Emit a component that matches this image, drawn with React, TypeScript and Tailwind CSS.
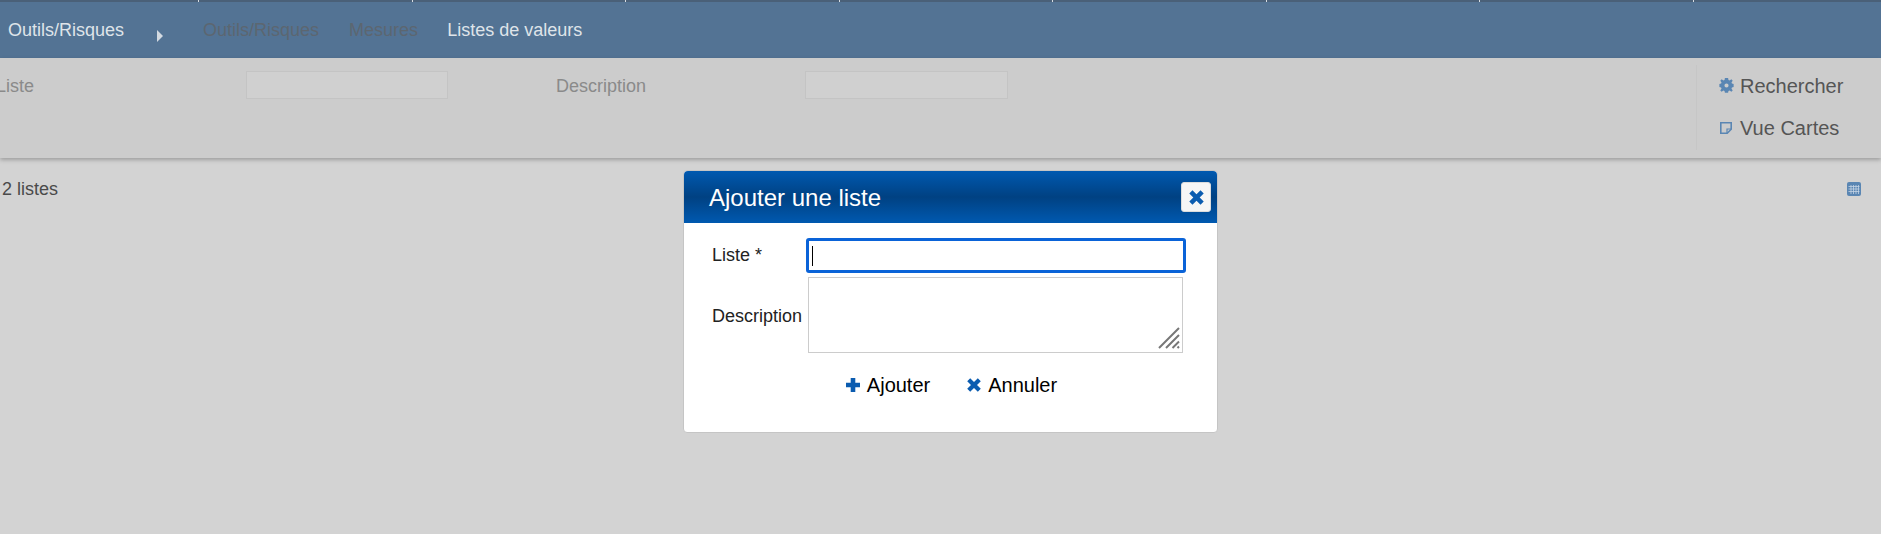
const TAB_COUNT = 8;

function CrossIcon({ className }: { className: string }) {
  return (
    <svg viewBox="0 0 16 16" className={className} fill="currentColor">
      <path d="M1.200 4.200 4.200 1.200 8 5l3.800-3.800 3 3L11 8l3.800 3.800-3 3L8 11l-3.800 3.800-3-3L5 8z" />
    </svg>
  );
}

function PlusIcon({ className }: { className: string }) {
  return (
    <svg viewBox="0 0 16 16" className={className} fill="currentColor">
      <path d="M5.700 1h4.600v4.700H15v4.600h-4.700V15H5.700v-4.700H1V5.700h4.700z" />
    </svg>
  );
}

function GearIcon({ className }: { className: string }) {
  return (
    <svg viewBox="0 0 16 16" className={className} fill="currentColor">
      <path
        fillRule="evenodd"
        d="M6.300 0h3.400l.4 2.200 1.200.5L13.200 1.400l1.400 1.400-1.300 1.900.5 1.200 1.800.4v3.400l-1.800.4-.5 1.200 1.300 1.900-1.400 1.400-1.900-1.300-1.200.5-.4 1.800H6.300l-.4-1.800-1.200-.5-1.900 1.300-1.400-1.400 1.300-1.900-.5-1.200L.4 9.700V6.300l1.800-.4.500-1.200L1.400 2.800l1.400-1.400 1.900 1.300 1.200-.5zM8 5.800a2.200 2.200 0 1 0 0 4.400 2.200 2.200 0 0 0 0-4.400z"
      />
    </svg>
  );
}

function NoteIcon({ className }: { className: string }) {
  return (
    <svg viewBox="0 0 12 12" className={className} fill="none" stroke="currentColor" strokeWidth="1.600">
      <path d="M.8.800h10.400v6.400L7.200 11.200H.8z" />
      <path d="M7 11V7h4" strokeWidth="1.200" />
    </svg>
  );
}

function GridIcon({ className }: { className: string }) {
  return (
    <svg viewBox="0 0 14 14" className={className}>
      <rect width="14" height="14" rx="2" fill="currentColor" />
      <path d="M1.500 4.500h11M1.500 7h11M1.500 9.500h11M4 3v9M6.500 3v9M9 3v9M11.500 3v9" stroke="#c4d3e3" strokeWidth="0.800" />
    </svg>
  );
}

function ResizeGrip() {
  return (
    <svg viewBox="0 0 22 22" className="absolute right-[2px] bottom-[3px] h-[22px] w-[22px]" stroke="#777777" strokeWidth="2">
      <path d="M1 21 21 1M8 21 21 8M14.500 21l6.500-6.500M19.500 21l1.500-1.500" />
    </svg>
  );
}

export default function App() {
  return (
    <div className="relative h-screen overflow-hidden bg-[#d3d3d3] font-['Liberation_Sans',Arial,sans-serif]">
      {/* Top nav */}
      <div className="h-[58px] bg-[#537394]">
        <div className="flex h-[2px] bg-[#4a6078]">
          {Array.from({ length: TAB_COUNT }).map((_, i) => (
            <div key={i} className={`h-full border-r border-[#d8dde2] ${i === 0 ? 'w-[199px]' : 'w-[213.500px]'}`} />
          ))}
        </div>
        <div className="flex h-[56px] items-center pt-[1px] text-[18px] text-[#dfe4e9]">
          <span className="ml-[8px]">Outils/Risques</span>
          <span className="ml-[33px] mt-[10px] h-0 w-0 border-y-[6px] border-l-[6px] border-y-transparent border-l-[#d3dae1]" />
          <span className="ml-[40px] text-[#5c6670]">Outils/Risques</span>
          <span className="ml-[30px] text-[#5c6670]">Mesures</span>
          <span className="ml-[29px]">Listes de valeurs</span>
        </div>
      </div>

      {/* Filter bar */}
      <div className="flex h-[100px] bg-[#cccccc] shadow-[0_2px_4px_rgba(0,0,0,0.25)]">
        <div className="flex flex-1 items-start pt-[13px] text-[18px] text-[#8a8a8a]">
          <span className="ml-[-4px] w-[250px] pt-[1px] leading-[28px]">Liste</span>
          <div className="h-[28px] w-[202px] border border-[#c4c4c4] bg-[#d0d0d0]" />
          <span className="ml-[108px] w-[249px] pt-[1px] leading-[28px]">Description</span>
          <div className="h-[28px] w-[203px] border border-[#c4c4c4] bg-[#d0d0d0]" />
        </div>
        <div className="mt-[7px] mb-[8px] w-[185px] border-l border-[#c6c6c6] pl-[22px] text-[20px] text-[#555555]">
          <div className="flex h-[41px] items-center gap-[6px]">
            <GearIcon className="h-[15px] w-[15px] text-[#5a86b3]" />
            <span>Rechercher</span>
          </div>
          <div className="flex h-[43px] items-center gap-[7px]">
            <NoteIcon className="ml-[1px] h-[12px] w-[12px] text-[#5a86b3]" />
            <span className="ml-[1px]">Vue Cartes</span>
          </div>
        </div>
      </div>

      {/* Results row */}
      <div className="flex items-center justify-between pt-[18px] pr-[20px] pl-[2px] text-[18px] text-[#4a4a4a]">
        <span>2 listes</span>
        <GridIcon className="-mt-[2px] h-[14px] w-[14px] text-[#5a86b3]" />
      </div>

      {/* Modal */}
      <div className="absolute top-[170px] left-[683px] h-[263px] w-[535px] rounded-[4px] border border-[#c5c5c5] bg-white">
        <div className="flex h-[52px] items-center justify-between rounded-t-[4px] bg-[linear-gradient(#0059b0,#004182_50%,#0059b0)] pr-[6px] pl-[25px]">
          <span className="pt-[1px] text-[24px] text-white">Ajouter une liste</span>
          <button className="flex h-[30px] w-[30px] items-center justify-center rounded-[3px] border border-[#dcdcdc] bg-[#f6f6f6] text-[#0b5cb0]">
            <CrossIcon className="h-[17px] w-[17px]" />
          </button>
        </div>
        <div className="flex pt-[15px] pl-[28px] text-[18px] text-[#222222]">
          <div className="w-[94px]">
            <div className="flex h-[35px] items-center">Liste *</div>
            <div className="flex h-[80px] items-center pt-[7px]">Description</div>
          </div>
          <div className="flex w-[380px] flex-col gap-[4px]">
            <div className="flex h-[35px] w-[380px] items-center rounded-[3px] border-[3px] border-[#0a63d8] pl-[3px]">
              <div className="h-[20px] w-px bg-black" />
            </div>
            <div className="relative ml-[2px] h-[76px] w-[375px] border border-[#cccccc]">
              <ResizeGrip />
            </div>
          </div>
        </div>
        <div className="flex justify-center gap-[36px] pt-[17px] pl-[1px] text-[20px] text-black">
          <div className="flex items-center gap-[6px]">
            <PlusIcon className="h-[16px] w-[16px] text-[#0b5cb0]" />
            <span>Ajouter</span>
          </div>
          <div className="flex items-center gap-[6px]">
            <CrossIcon className="h-[16px] w-[16px] text-[#0b5cb0]" />
            <span>Annuler</span>
          </div>
        </div>
      </div>
    </div>
  );
}
